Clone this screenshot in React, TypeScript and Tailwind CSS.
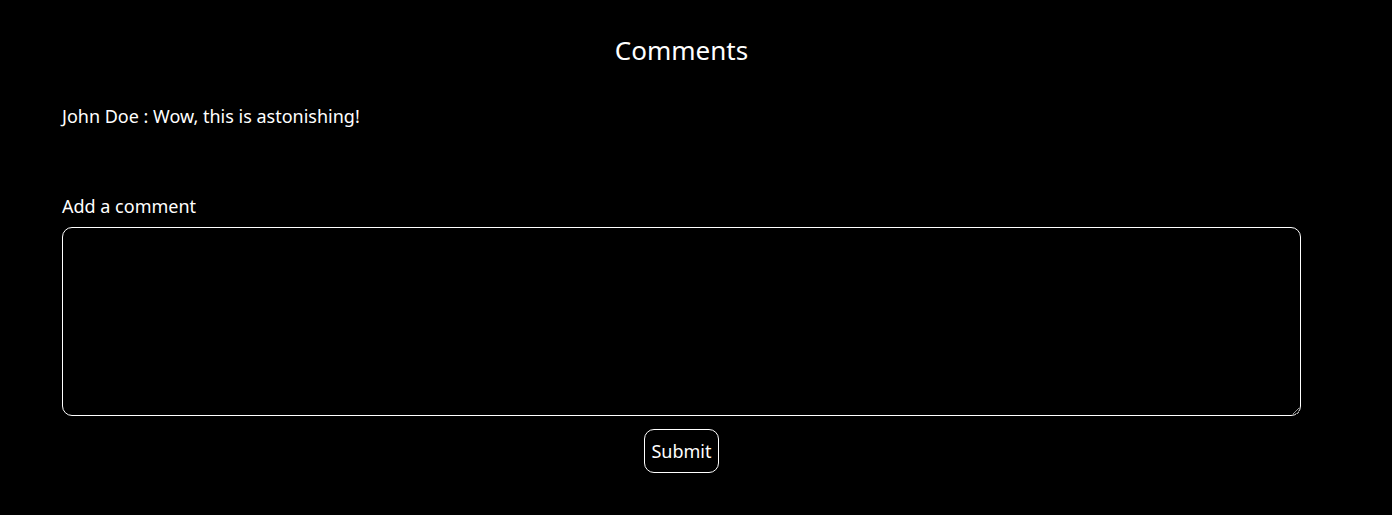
export default function App() {
  return (
    <div className="min-h-[515px] w-full bg-black text-white" style={{ fontFamily: '"Noto Sans", "Open Sans", sans-serif' }}>
      <div className="ml-[62px] w-[1239px] flex flex-col pt-[33px]">
        <h1 className="text-center text-[26px] leading-[34px]">Comments</h1>
        <p className="mt-[37px] text-[18px] leading-[24px]">John Doe : Wow, this is astonishing!</p>
        <label className="mt-[66px] text-[18px] leading-[24px]">Add a comment</label>
        <textarea className="mt-[9px] h-[189px] w-full rounded-[10px] border border-white bg-black text-white outline-none" />
        <div className="flex justify-center mt-[13px]">
          <button className="h-[44px] w-[75px] rounded-[10px] border border-white bg-black text-[18px] text-white">Submit</button>
        </div>
      </div>
    </div>
  );
}
